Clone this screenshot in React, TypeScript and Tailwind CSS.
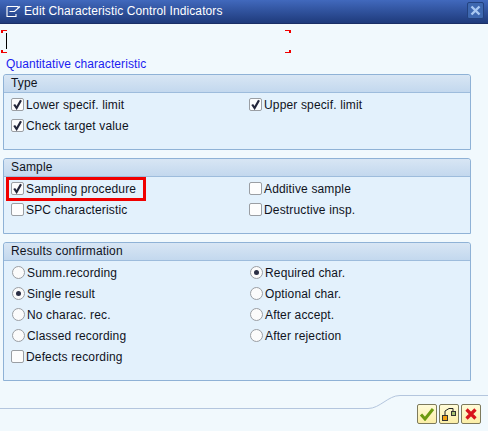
import type { ReactNode } from "react";

function Check({ checked, label }: { checked?: boolean; label: string }) {
  return (
    <div className="flex h-[21px] items-center">
      <span className="flex h-[13px] w-[13px] items-center justify-center rounded-[2px] border border-[#9a9ea3] bg-[#fdfdfd]">
        {checked && (
          <svg width="11" height="11" viewBox="0 0 11 11" className="block">
            <path d="M2.2 5.5 L4.6 9 L9 1.2" fill="none" stroke="#23263a" strokeWidth="2.2" />
          </svg>
        )}
      </span>
      <span className="ml-[2px] whitespace-nowrap">{label}</span>
    </div>
  );
}

function Radio({ checked, label }: { checked?: boolean; label: string }) {
  return (
    <div className="flex h-[21px] items-center pl-[1px]">
      <span className="flex h-[13px] w-[13px] items-center justify-center rounded-full border border-[#9a9ea3] bg-[#fbfbfb]">
        {checked && <span className="h-[5px] w-[5px] rounded-full bg-[#2b2f45]" />}
      </span>
      <span className="ml-[2px] whitespace-nowrap">{label}</span>
    </div>
  );
}

function Group({ title, height, children }: { title: string; height: string; children: ReactNode }) {
  return (
    <section className={`mx-[3px] w-[468px] rounded-t-[3px] border border-[#8fb2d6] bg-[#e3f1fc] ${height}`}>
      <div className="h-[18px] rounded-t-[3px] border-b border-[#9dbcdc] bg-gradient-to-b from-[#d8e6f4] to-[#c3d8ee] pl-[7px] leading-[17px]">
        {title}
      </div>
      <div className="grid grid-cols-[238px_1fr] pl-[7px] pt-[1px]">{children}</div>
    </section>
  );
}

function ToolButton({ children }: { children: ReactNode }) {
  return (
    <button className="flex h-[20px] w-[20px] items-center justify-center rounded-[2px] border border-[#7d7a5c] bg-gradient-to-b from-[#fffbd8] to-[#fbeea6]">
      {children}
    </button>
  );
}

export default function App() {
  return (
    <div className="relative h-[431px] w-[488px] overflow-hidden bg-[#f1f9fd] font-['Liberation_Sans',Arial,sans-serif] text-[12px] tracking-[0.15px] text-[#10131c]">
      <header className="flex h-[24px] items-center border-b border-[#1b2f66] bg-gradient-to-b from-[#4169bd] to-[#1f3b7c] pb-[2px] pl-[6px] text-[12px] tracking-[0.1px] text-white">
        <svg width="16" height="14" viewBox="0 0 16 14" className="mr-[2px]">
          <path d="M1 2.5 H12 V4 M1 2.5 V12.5 H10 V10 M3.5 7.5 H8.5 L14 2.5" fill="none" stroke="#fff" strokeWidth="1.1" />
        </svg>
        Edit Characteristic Control Indicators
        <button className="ml-auto mr-[4px] flex h-[17px] w-[17px] items-center justify-center rounded-[2px] border border-[#23427f] bg-[#3e68b0]">
          <svg width="11" height="11" viewBox="0 0 11 11">
            <path d="M1.5 1.5 L9.5 9.5 M9.5 1.5 L1.5 9.5" stroke="#a9c8f2" strokeWidth="2.4" />
          </svg>
        </button>
      </header>

      <div className="relative mt-[6px] h-[23px] w-full">
        <span className="absolute left-[1px] top-0 h-[3px] w-[6px] border-l-2 border-t border-[#f00000]" />
        <span className="absolute bottom-0 left-[1px] h-[3px] w-[6px] border-b border-l-2 border-[#f00000]" />
        <span className="absolute left-[285px] top-0 h-[3px] w-[6px] border-r-2 border-t border-[#f00000]" />
        <span className="absolute bottom-0 left-[285px] h-[3px] w-[6px] border-b border-r-2 border-[#f00000]" />
        <span className="absolute left-[6px] top-[3px] h-[16px] w-px bg-black" />
      </div>
      <div className="ml-[6px] mt-[1px] h-[20px] leading-[20px] tracking-[0.08px] text-[#1c1cf0]">Quantitative characteristic</div>

      <Group title="Type" height="h-[76px]">
        <Check checked label="Lower specif. limit" />
        <Check checked label="Upper specif. limit" />
        <Check checked label="Check target value" />
      </Group>

      <div className="h-[8px]" />

      <div className="relative">
        <Group title="Sample" height="h-[76px]">
          <Check checked label="Sampling procedure" />
          <Check label="Additive sample" />
          <Check label="SPC characteristic" />
          <Check label="Destructive insp." />
        </Group>
        <span className="absolute left-[6px] top-[19px] h-[24px] w-[140px] border-[3px] border-[#f00000]" />
      </div>

      <div className="h-[8px]" />

      <Group title="Results confirmation" height="h-[139px]">
        <Radio label="Summ.recording" />
        <Radio checked label="Required char." />
        <Radio checked label="Single result" />
        <Radio label="Optional char." />
        <Radio label="No charac. rec." />
        <Radio label="After accept." />
        <Radio label="Classed recording" />
        <Radio label="After rejection" />
        <Check label="Defects recording" />
      </Group>

      <svg width="488" height="20" viewBox="0 0 488 20" className="absolute left-0 top-[391px]">
        <path d="M0 17.5 H368 C380 17.5 388 4.5 400 4.5 H488" fill="none" stroke="#b4c6de" strokeWidth="1" />
      </svg>

      <footer className="absolute right-[7px] top-[404px] flex gap-[2px]">
        <ToolButton>
          <svg width="16" height="14" viewBox="0 0 16 14">
            <path d="M2 7.5 L6 12 L14 2" fill="none" stroke="#6b9a10" strokeWidth="3" />
          </svg>
        </ToolButton>
        <ToolButton>
          <svg width="16" height="16" viewBox="0 0 16 16">
            <rect x="1.5" y="9.5" width="5" height="5" fill="#f2a010" stroke="#333" />
            <rect x="10.5" y="5.5" width="4" height="4" fill="#a4c070" stroke="#333" />
            <path d="M4 9 V5 L8 2.5 H12 V5" fill="none" stroke="#222" />
          </svg>
        </ToolButton>
        <ToolButton>
          <svg width="14" height="14" viewBox="0 0 14 14">
            <path d="M2.5 2.5 L11.5 11.5 M11.5 2.5 L2.5 11.5" stroke="#d8141c" strokeWidth="3.2" />
          </svg>
        </ToolButton>
      </footer>
    </div>
  );
}
